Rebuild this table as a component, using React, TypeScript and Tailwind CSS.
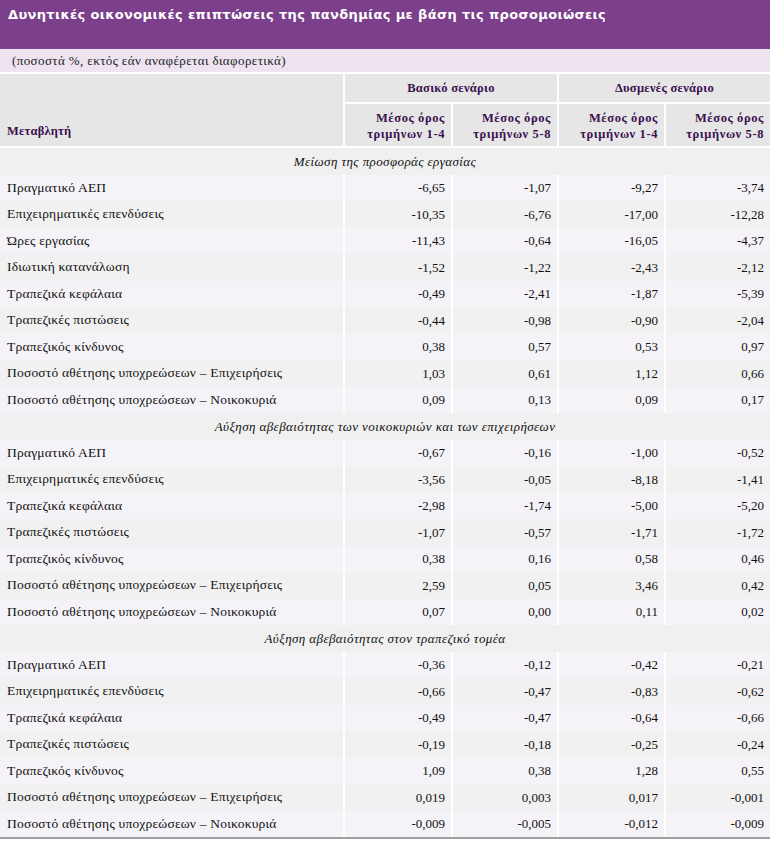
const serif = { fontFamily: '"Liberation Serif", "DejaVu Serif", serif' };

type Row = [string, string, string, string, string];

const sections: { title: string; rows: Row[] }[] = [
  {
    title: "Μείωση της προσφοράς εργασίας",
    rows: [
      ["Πραγματικό ΑΕΠ", "-6,65", "-1,07", "-9,27", "-3,74"],
      ["Επιχειρηματικές επενδύσεις", "-10,35", "-6,76", "-17,00", "-12,28"],
      ["Ώρες εργασίας", "-11,43", "-0,64", "-16,05", "-4,37"],
      ["Ιδιωτική κατανάλωση", "-1,52", "-1,22", "-2,43", "-2,12"],
      ["Τραπεζικά κεφάλαια", "-0,49", "-2,41", "-1,87", "-5,39"],
      ["Τραπεζικές πιστώσεις", "-0,44", "-0,98", "-0,90", "-2,04"],
      ["Τραπεζικός κίνδυνος", "0,38", "0,57", "0,53", "0,97"],
      ["Ποσοστό αθέτησης υποχρεώσεων – Επιχειρήσεις", "1,03", "0,61", "1,12", "0,66"],
      ["Ποσοστό αθέτησης υποχρεώσεων – Νοικοκυριά", "0,09", "0,13", "0,09", "0,17"],
    ],
  },
  {
    title: "Αύξηση αβεβαιότητας των νοικοκυριών και των επιχειρήσεων",
    rows: [
      ["Πραγματικό ΑΕΠ", "-0,67", "-0,16", "-1,00", "-0,52"],
      ["Επιχειρηματικές επενδύσεις", "-3,56", "-0,05", "-8,18", "-1,41"],
      ["Τραπεζικά κεφάλαια", "-2,98", "-1,74", "-5,00", "-5,20"],
      ["Τραπεζικές πιστώσεις", "-1,07", "-0,57", "-1,71", "-1,72"],
      ["Τραπεζικός κίνδυνος", "0,38", "0,16", "0,58", "0,46"],
      ["Ποσοστό αθέτησης υποχρεώσεων – Επιχειρήσεις", "2,59", "0,05", "3,46", "0,42"],
      ["Ποσοστό αθέτησης υποχρεώσεων – Νοικοκυριά", "0,07", "0,00", "0,11", "0,02"],
    ],
  },
  {
    title: "Αύξηση αβεβαιότητας στον τραπεζικό τομέα",
    rows: [
      ["Πραγματικό ΑΕΠ", "-0,36", "-0,12", "-0,42", "-0,21"],
      ["Επιχειρηματικές επενδύσεις", "-0,66", "-0,47", "-0,83", "-0,62"],
      ["Τραπεζικά κεφάλαια", "-0,49", "-0,47", "-0,64", "-0,66"],
      ["Τραπεζικές πιστώσεις", "-0,19", "-0,18", "-0,25", "-0,24"],
      ["Τραπεζικός κίνδυνος", "1,09", "0,38", "1,28", "0,55"],
      ["Ποσοστό αθέτησης υποχρεώσεων – Επιχειρήσεις", "0,019", "0,003", "0,017", "-0,001"],
      ["Ποσοστό αθέτησης υποχρεώσεων – Νοικοκυριά", "-0,009", "-0,005", "-0,012", "-0,009"],
    ],
  },
];

const cols = "grid grid-cols-[343px_106px_104px_105px_104px] gap-x-[2px]";

function SubHead({ label }: { label: string }) {
  return (
    <div className="bg-[#e6e6e6] flex flex-col items-end justify-center pr-[6px] pt-[1px] text-[12.5px] font-bold leading-[16px] tracking-[0.6px] text-[#3a1150]">
      <span>Μέσος όρος</span>
      <span>τριμήνων {label}</span>
    </div>
  );
}

export default function App() {
  return (
    <div className="w-[774px] min-h-[842px] bg-white">
      <div className="w-[770px]">
        {/* Title */}
        <div className="h-[49px] bg-[#7b3f8c] px-[8px] pt-[5px]">
          <h1
            className="text-white font-bold text-[13px] tracking-[0.35px]"
            style={{ fontFamily: '"DejaVu Sans", Verdana, sans-serif' }}
          >
            Δυνητικές οικονομικές επιπτώσεις της πανδημίας με βάση τις προσομοιώσεις
          </h1>
        </div>

        <div style={serif}>
          {/* Subtitle */}
          <div className="h-[23px] bg-[#ede4f0] px-[12px] flex items-center text-[13px] tracking-[0.4px] text-[#222]">
            (ποσοστά %, εκτός εάν αναφέρεται διαφορετικά)
          </div>

          {/* Header */}
          <div className={`${cols} grid-rows-[28px_42px] gap-y-[2px] mt-[2px] mb-[2px]`}>
            <div className="row-span-2 bg-[#e6e6e6] flex items-end px-[7px] pb-[5px] text-[12.5px] font-bold tracking-[0.2px] text-[#3a1150]">
              Μεταβλητή
            </div>
            <div className="col-span-2 bg-[#e6e6e6] flex items-center justify-center text-[12.5px] font-bold tracking-[0.3px] text-[#3a1150]">
              Βασικό σενάριο
            </div>
            <div className="col-span-2 bg-[#e6e6e6] flex items-center justify-center text-[12.5px] font-bold tracking-[0.3px] text-[#3a1150]">
              Δυσμενές σενάριο
            </div>
            <SubHead label="1-4" />
            <SubHead label="5-8" />
            <SubHead label="1-4" />
            <SubHead label="5-8" />
          </div>

          {/* Body */}
          <div className="border-b-2 border-[#a0a0a0]">
            {sections.map((s) => (
              <div key={s.title}>
                <div className="h-[26.5px] bg-[#f0f0f0] flex items-center justify-center italic text-[13px] tracking-[0.4px] text-[#111]">
                  {s.title}
                </div>
                {s.rows.map((r, i) => {
                  const bg = i % 2 === 0 ? "bg-[#f5f3f7]" : "bg-[#f1f1f1]";
                  return (
                    <div key={r[0] + i} className={`${cols} h-[26.5px] text-[13px] text-[#111]`}>
                      <div className={`${bg} flex items-center px-[7px] text-[13.5px] tracking-[0.2px]`}>{r[0]}</div>
                      {r.slice(1).map((v, j) => (
                        <div key={j} className={`${bg} flex items-center justify-end pr-[6px]`}>
                          {v}
                        </div>
                      ))}
                    </div>
                  );
                })}
              </div>
            ))}
          </div>
        </div>
      </div>
    </div>
  );
}
